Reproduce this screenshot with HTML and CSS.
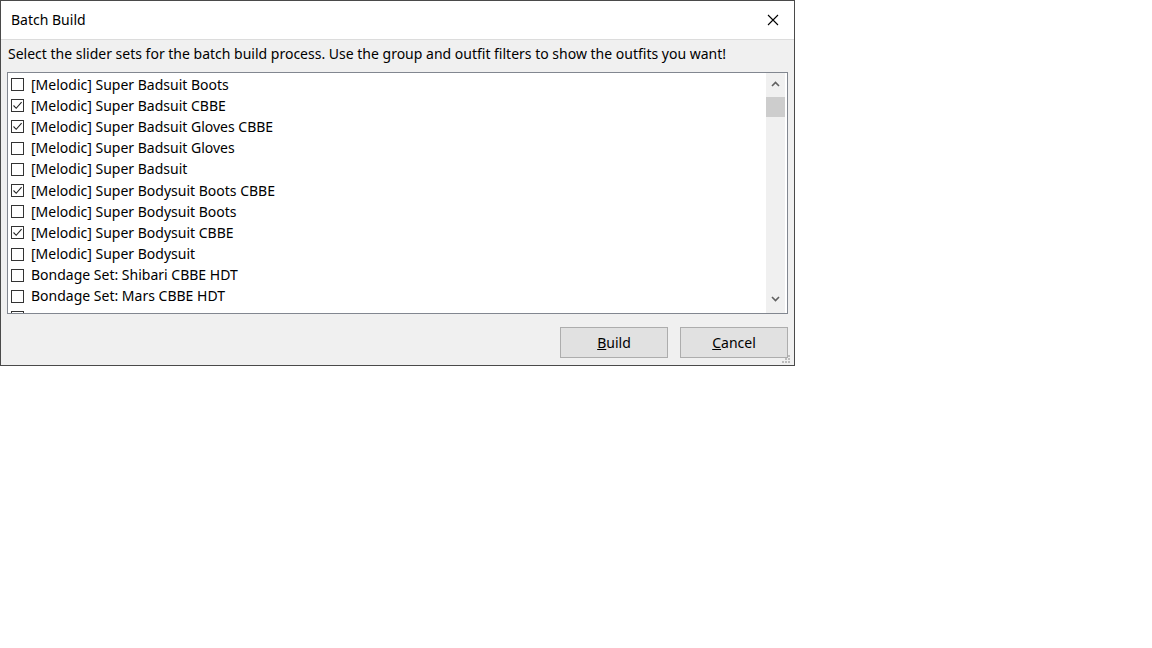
FILE: index.html
```html
<!DOCTYPE html>
<html>
<head>
<meta charset="utf-8">
<link rel="stylesheet" href="styles.css">
</head>
<body>
<div class="dialog">
  <div class="titlebar">
    <span class="title">Batch Build</span>
    <span class="close">
      <svg width="12" height="12" viewBox="0 0 12 12"><path d="M1 1 L11 11 M11 1 L1 11" stroke="#000" stroke-width="1.1" fill="none"/></svg>
    </span>
  </div>
  <div class="body">
    <div class="desc">Select the slider sets for the batch build process. Use the group and outfit filters to show the outfits you want!</div>
    <div class="listbox">
      <div class="items">
        <div class="row"><span class="cb"></span><span class="lbl">[Melodic] Super Badsuit Boots</span></div>
        <div class="row"><span class="cb checked"><svg width="11" height="11" viewBox="0 0 11 11"><path d="M1.5 5.5 L4.2 8.3 L9.6 2.2" stroke="#222" stroke-width="1.1" fill="none"/></svg></span><span class="lbl">[Melodic] Super Badsuit CBBE</span></div>
        <div class="row"><span class="cb checked"><svg width="11" height="11" viewBox="0 0 11 11"><path d="M1.5 5.5 L4.2 8.3 L9.6 2.2" stroke="#222" stroke-width="1.1" fill="none"/></svg></span><span class="lbl">[Melodic] Super Badsuit Gloves CBBE</span></div>
        <div class="row"><span class="cb"></span><span class="lbl">[Melodic] Super Badsuit Gloves</span></div>
        <div class="row"><span class="cb"></span><span class="lbl">[Melodic] Super Badsuit</span></div>
        <div class="row"><span class="cb checked"><svg width="11" height="11" viewBox="0 0 11 11"><path d="M1.5 5.5 L4.2 8.3 L9.6 2.2" stroke="#222" stroke-width="1.1" fill="none"/></svg></span><span class="lbl">[Melodic] Super Bodysuit Boots CBBE</span></div>
        <div class="row"><span class="cb"></span><span class="lbl">[Melodic] Super Bodysuit Boots</span></div>
        <div class="row"><span class="cb checked"><svg width="11" height="11" viewBox="0 0 11 11"><path d="M1.5 5.5 L4.2 8.3 L9.6 2.2" stroke="#222" stroke-width="1.1" fill="none"/></svg></span><span class="lbl">[Melodic] Super Bodysuit CBBE</span></div>
        <div class="row"><span class="cb"></span><span class="lbl">[Melodic] Super Bodysuit</span></div>
        <div class="row"><span class="cb"></span><span class="lbl">Bondage Set: Shibari CBBE HDT</span></div>
        <div class="row"><span class="cb"></span><span class="lbl">Bondage Set: Mars CBBE HDT</span></div>
        <div class="row"><span class="cb"></span></div>
      </div>
      <div class="scrollbar">
        <div class="arrow">
          <svg width="9" height="6" viewBox="0 0 9 6"><path d="M1 5 L4.5 1.5 L8 5" stroke="#606060" stroke-width="1.6" fill="none"/></svg>
        </div>
        <div class="track"><div class="thumb"></div></div>
        <div class="arrow down">
          <svg width="9" height="6" viewBox="0 0 9 6"><path d="M1 1 L4.5 4.5 L8 1" stroke="#606060" stroke-width="1.6" fill="none"/></svg>
        </div>
      </div>
    </div>
    <div class="buttons">
      <button class="btn"><u>B</u>uild</button>
      <button class="btn"><u>C</u>ancel</button>
    </div>
  </div>
  <div class="grip">
    <svg width="10" height="10" viewBox="0 0 10 10">
      <rect x="7" y="1" width="2" height="2" fill="#bcbcbc"/>
      <rect x="4" y="4" width="2" height="2" fill="#bcbcbc"/>
      <rect x="7" y="4" width="2" height="2" fill="#bcbcbc"/>
      <rect x="1" y="7" width="2" height="2" fill="#bcbcbc"/>
      <rect x="4" y="7" width="2" height="2" fill="#bcbcbc"/>
      <rect x="7" y="7" width="2" height="2" fill="#bcbcbc"/>
    </svg>
  </div>
</div>
</body>
</html>
```
FILE: styles.css
```css
html, body {
  margin: 0;
  padding: 0;
  background: #ffffff;
}
body {
  font-family: "Noto Sans", "Open Sans", sans-serif;
  font-size: 14px;
  color: #000;
}
.dialog {
  position: relative;
  width: 795px;
  height: 366px;
  box-sizing: border-box;
  border: 1px solid #4a4a4a;
  background: #f0f0f0;
  display: flex;
  flex-direction: column;
}
.titlebar {
  height: 38px;
  background: #fff;
  border-bottom: 1px solid #dcdcdc;
  display: flex;
  align-items: center;
  justify-content: space-between;
  padding-left: 10px;
  padding-right: 15px;
}
.title {
  font-size: 14px;
  line-height: 18px;
}
.close {
  display: flex;
  width: 12px;
  height: 12px;
}
.body {
  flex: 1;
  display: flex;
  flex-direction: column;
  padding: 5px 6px 0 6px;
}
.desc {
  line-height: 18px;
  white-space: nowrap;
  padding-left: 1px;
}
.listbox {
  margin-top: 9px;
  height: 242px;
  box-sizing: border-box;
  border: 1px solid #828790;
  background: #fff;
  display: flex;
  overflow: hidden;
}
.items {
  flex: 1;
  padding-top: 1px;
  padding-left: 3px;
  overflow: hidden;
}
.row {
  height: 21.2px;
  display: flex;
  align-items: center;
  gap: 7px;
  white-space: nowrap;
}
.cb {
  width: 13px;
  height: 13px;
  box-sizing: border-box;
  border: 1px solid #333;
  background: #fff;
  display: flex;
  align-items: center;
  justify-content: center;
  flex: none;
}
.lbl {
  line-height: 18px;
}
.scrollbar {
  width: 19px;
  margin: 0 2px 0 0;
  background: #f0f0f0;
  display: flex;
  flex-direction: column;
}
.arrow {
  height: 22px;
  display: flex;
  align-items: center;
  justify-content: center;
}
.arrow.down {
  margin-bottom: 3px;
}
.track {
  flex: 1;
  padding-top: 2px;
}
.thumb {
  height: 20px;
  background: #cdcdcd;
}
.buttons {
  display: flex;
  justify-content: flex-end;
  gap: 12px;
  margin-top: 13px;
}
.btn {
  width: 108px;
  height: 31px;
  box-sizing: border-box;
  border: 1px solid #adadad;
  background: #e1e1e1;
  font-family: inherit;
  font-size: 14px;
  color: #000;
  padding: 0;
}
.grip {
  position: absolute;
  right: 3px;
  bottom: 1px;
  width: 10px;
  height: 10px;
  display: flex;
}
```
